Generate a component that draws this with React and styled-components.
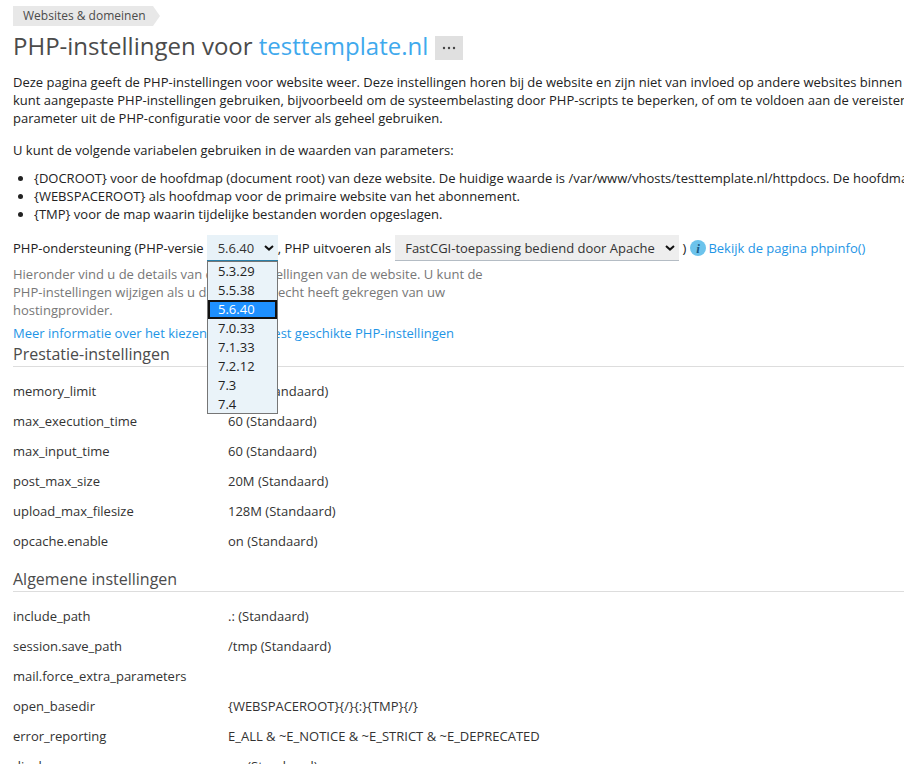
import React from "react";
import styled, { createGlobalStyle } from "styled-components";

const Global = createGlobalStyle`
  html, body { margin: 0; padding: 0; background: #fff; overflow: hidden; }
  body { font-family: "Open Sans", "Liberation Sans", sans-serif; font-size: 13px; line-height: 18px; color: #222; }
`;

const Page = styled.div`
  width: 904px;
  height: 764px;
  overflow: hidden;
  box-sizing: border-box;
  padding: 6px 0 0 13px;
`;

const Content = styled.div`
  width: 1100px;
`;

const CrumbRow = styled.div`
  display: flex;
  height: 20px;
`;

const Crumb = styled.div`
  display: flex;
  align-items: center;
  width: 140px;
  height: 20px;
  padding-left: 10px;
  box-sizing: border-box;
  background: #e8e8e8;
  color: #4b4b4b;
  font-size: 12px;
`;

const CrumbTip = styled.div`
  width: 0;
  height: 0;
  border-top: 10px solid transparent;
  border-bottom: 10px solid transparent;
  border-left: 7px solid #e8e8e8;
`;

const Title = styled.h1`
  display: flex;
  align-items: center;
  margin: 0;
  height: 40px;
  font-size: 24px;
  font-weight: 400;
  line-height: 40px;
  color: #4b4b4b;
  white-space: pre;
`;

const TitleLink = styled.span`
  color: #3fa9ed;
`;

const More = styled.span`
  display: inline-flex;
  align-items: center;
  justify-content: center;
  width: 28px;
  height: 24px;
  margin: 3px 0 0 7px;
  background: #e0e0e0;
`;

const Para = styled.p`
  margin: 7px 0 0;
  white-space: nowrap;
  line-height: 18px;
`;

const Intro = styled.p`
  margin: 14px 0 0;
  line-height: 18px;
`;

const Bullets = styled.ul`
  margin: 10px 0 0;
  padding: 0 0 0 21px;
  li { line-height: 18px; white-space: nowrap; }
`;

const SupportRow = styled.div`
  position: relative;
  display: flex;
  align-items: center;
  margin-top: 12px;
  height: 26px;
  white-space: pre;
`;

const chevron =
  "url(\"data:image/svg+xml,%3Csvg xmlns='http://www.w3.org/2000/svg' width='10' height='6' viewBox='0 0 10 6'%3E%3Cpath d='M1 1l4 3.6L9 1' fill='none' stroke='%23111' stroke-width='2'/%3E%3C/svg%3E\")";

const NativeSelect = styled.select`
  appearance: none;
  height: 26px;
  width: ${(p) => p.$w}px;
  margin: ${(p) => p.$m};
  padding: 0 0 0 ${(p) => p.$pad}px;
  border: 0;
  border-bottom: 1px solid ${(p) => p.$line};
  border-radius: 0;
  background: ${(p) => p.$bg} ${chevron} no-repeat right 4px center;
  font: inherit;
  color: #333;
`;

const InfoDot = styled.svg`
  width: 16px;
  height: 16px;
  margin: 0 2px 0 4px;
  flex: none;
`;

const A = styled.span`
  color: #1e95e6;
`;

const ListBox = styled.div`
  position: absolute;
  left: 194px;
  top: 26px;
  width: 71px;
  height: 153px;
  box-sizing: border-box;
  border: 1px solid #767676;
  background: #eaf3f9;
  z-index: 2;
`;

const Option = styled.div`
  height: 19px;
  box-sizing: border-box;
  color: ${(p) => (p.$sel ? "#fff" : "#222")};
  background: ${(p) => (p.$sel ? "#1e90ff" : "transparent")};
  border: ${(p) => (p.$sel ? "2px solid #111" : "0")};
  line-height: ${(p) => (p.$sel ? 15 : 19)}px;
  padding-left: ${(p) => (p.$sel ? 8 : 10)}px;
`;

const Hint = styled.p`
  margin: 4px 0 0;
  color: #777;
  width: 480px;
  line-height: 18px;
`;

const MoreLink = styled.div`
  margin-top: 5px;
  line-height: 18px;
  color: #1e95e6;
`;

const Section = styled.h2`
  margin: ${(p) => p.$top}px 0 0;
  width: 891px;
  height: 24px;
  font-size: 16px;
  font-weight: 400;
  line-height: 22px;
  color: #4b4b4b;
  border-bottom: 1px solid #ddd;
  box-sizing: border-box;
`;

const Rows = styled.div`
  margin-top: 9px;
`;

const Row = styled.div`
  display: grid;
  grid-template-columns: 215px 1fr;
  height: 30px;
  line-height: 30px;
  color: #333;
`;

const perf = [
  ["memory_limit", "64M (Standaard)"],
  ["max_execution_time", "60 (Standaard)"],
  ["max_input_time", "60 (Standaard)"],
  ["post_max_size", "20M (Standaard)"],
  ["upload_max_filesize", "128M (Standaard)"],
  ["opcache.enable", "on (Standaard)"],
];

const general = [
  ["include_path", ".: (Standaard)"],
  ["session.save_path", "/tmp (Standaard)"],
  ["mail.force_extra_parameters", ""],
  ["open_basedir", "{WEBSPACEROOT}{/}{:}{TMP}{/}"],
  ["error_reporting", "E_ALL & ~E_NOTICE & ~E_STRICT & ~E_DEPRECATED"],
  ["display_errors", "on (Standaard)"],
];

const versions = ["5.3.29", "5.5.38", "5.6.40", "7.0.33", "7.1.33", "7.2.12", "7.3", "7.4"];

export default function App() {
  return (
    <Page>
      <Global />
      <Content>
        <CrumbRow>
          <Crumb>Websites &amp; domeinen</Crumb>
          <CrumbTip />
        </CrumbRow>
        <Title>
          PHP-instellingen voor <TitleLink>testtemplate.nl</TitleLink>
          <More>
            <svg width="14" height="4" viewBox="0 0 14 4">
              <circle cx="2" cy="2" r="1.2" fill="#444" />
              <circle cx="7" cy="2" r="1.2" fill="#444" />
              <circle cx="12" cy="2" r="1.2" fill="#444" />
            </svg>
          </More>
        </Title>
        <Para>
          Deze pagina geeft de PHP-instellingen voor website weer. Deze instellingen horen bij de website en zijn niet van invloed op andere websites binnen
          <br />
          kunt aangepaste PHP-instellingen gebruiken, bijvoorbeeld om de systeembelasting door PHP-scripts te beperken, of om te voldoen aan de vereisten
          <br />
          parameter uit de PHP-configuratie voor de server als geheel gebruiken.
        </Para>
        <Intro>U kunt de volgende variabelen gebruiken in de waarden van parameters:</Intro>
        <Bullets>
          <li>{"{DOCROOT}"} voor de hoofdmap (document root) van deze website. De huidige waarde is /var/www/vhosts/testtemplate.nl/httpdocs. De hoofdmap</li>
          <li>{"{WEBSPACEROOT}"} als hoofdmap voor de primaire website van het abonnement.</li>
          <li>{"{TMP}"} voor de map waarin tijdelijke bestanden worden opgeslagen.</li>
        </Bullets>
        <SupportRow>
          PHP-ondersteuning (PHP-versie
          <NativeSelect $w={71} $m="0 0 0 3px" $pad={11} $bg="#e8f2f8" $line="#2a7fa8" defaultValue="5.6.40">
            {versions.map((v) => (
              <option key={v}>{v}</option>
            ))}
          </NativeSelect>
          , PHP uitvoeren als
          <NativeSelect $w={284} $m="0 0 0 4px" $pad={10} $bg="#eee" $line="#b4bcc4">
            <option>FastCGI-toepassing bediend door Apache</option>
          </NativeSelect>
          {" )"}
          <InfoDot viewBox="0 0 16 16">
            <circle cx="8" cy="8" r="8" fill="#6cc3ec" />
            <text x="8" y="12.5" textAnchor="middle" fontFamily="Liberation Serif, serif" fontStyle="italic" fontWeight="700" fontSize="13" fill="#1a5a86">i</text>
          </InfoDot>
          <A>Bekijk de pagina phpinfo()</A>
          <ListBox>
            {versions.map((v) => (
              <Option key={v} $sel={v === "5.6.40"}>{v}</Option>
            ))}
          </ListBox>
        </SupportRow>
        <Hint>
          Hieronder vind u de details van de PHP-instellingen van de website. U kunt de PHP-instellingen wijzigen als u daartoe het recht heeft gekregen van uw hostingprovider.
        </Hint>
        <MoreLink>Meer informatie over het kiezen van de meest geschikte PHP-instellingen</MoreLink>
        <Section $top={1}>Prestatie-instellingen</Section>
        <Rows>
          {perf.map(([k, v]) => (
            <Row key={k}><span>{k}</span><span>{v}</span></Row>
          ))}
        </Rows>
        <Section $top={12}>Algemene instellingen</Section>
        <Rows>
          {general.map(([k, v]) => (
            <Row key={k}><span>{k}</span><span>{v}</span></Row>
          ))}
        </Rows>
      </Content>
    </Page>
  );
}
